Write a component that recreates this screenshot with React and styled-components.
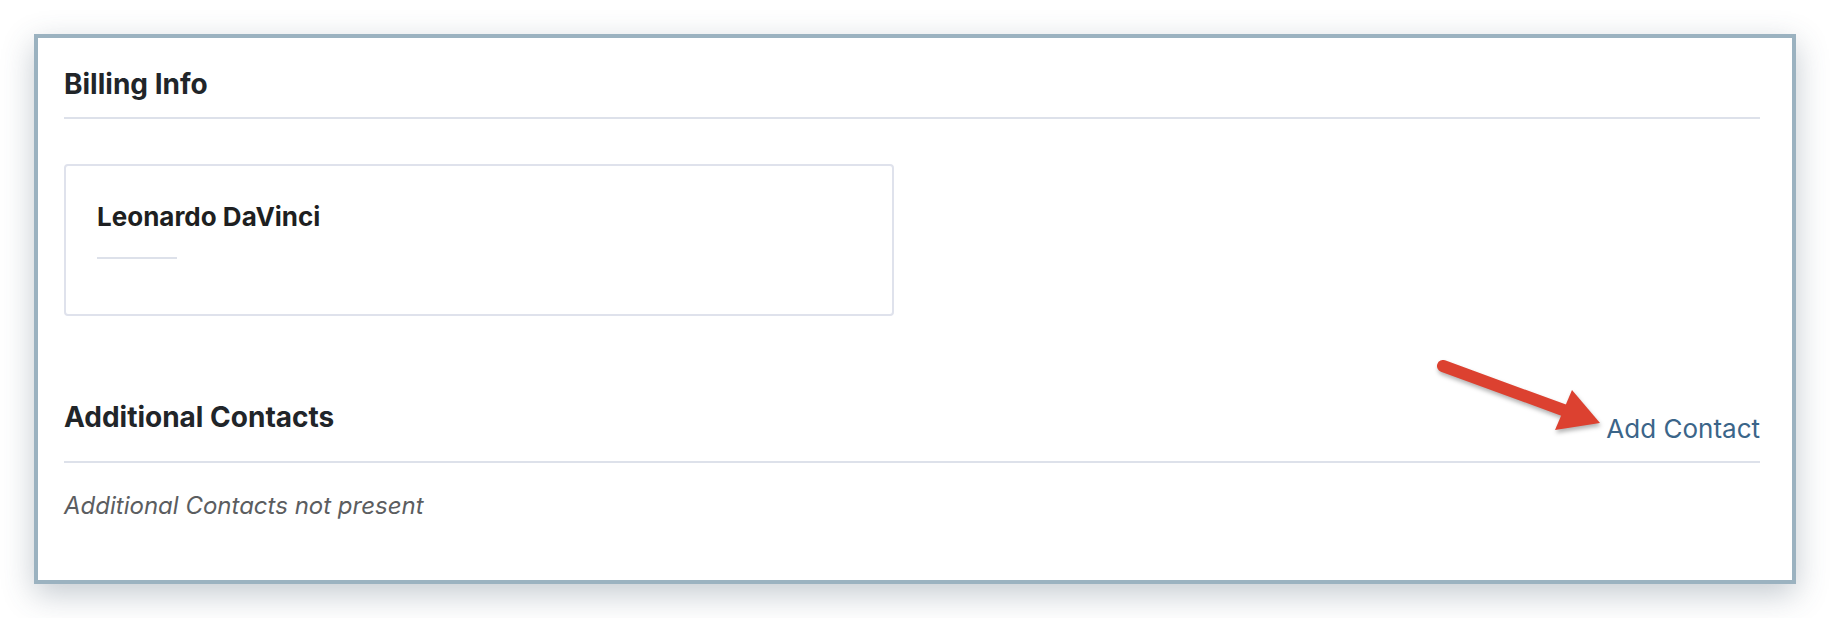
import React from 'react';
import styled, { createGlobalStyle } from 'styled-components';

const GlobalStyle = createGlobalStyle`
  html, body {
    margin: 0;
    padding: 0;
    background: #ffffff;
    font-family: Inter, "Noto Sans", "Liberation Sans", sans-serif;
  }
`;

const Page = styled.div`
  padding: 34px;
  width: 1762px;
`;

const Frame = styled.div`
  position: relative;
  border: 4px solid #9bb2c0;
  background: #fff;
  box-shadow: 0 10px 30px rgba(60, 80, 100, 0.3);
  padding: 30px 32px 59px 26px;
`;

const SectionHeader = styled.div`
  display: flex;
  justify-content: space-between;
  align-items: flex-end;
  padding-bottom: ${(p) => p.$pb || 17}px;
  border-bottom: 2px solid #dde1ea;
`;

const Title = styled.h2`
  margin: 0 0 ${(p) => p.$mb || 0}px 0;
  font-size: 28px;
  line-height: 32px;
  font-weight: 700;
  color: #212529;
`;

const ContactCard = styled.div`
  margin-top: 45px;
  width: 830px;
  box-sizing: border-box;
  border: 2px solid #dfe2ec;
  border-radius: 4px;
  padding: 35px 31px 55px 31px;
`;

const Name = styled.div`
  font-size: 26px;
  line-height: 32px;
  font-weight: 700;
  color: #1e1f21;
`;

const NameRule = styled.div`
  margin-top: 24px;
  width: 80px;
  height: 2px;
  background: #dde1ea;
`;

const Spacer = styled.div`
  height: 85px;
`;

const AddLink = styled.a`
  font-size: 26px;
  line-height: 32px;
  color: #3b6589;
  text-decoration: none;
  cursor: pointer;
`;

const EmptyNote = styled.p`
  margin: 28px 0 0 0;
  font-size: 24px;
  line-height: 30px;
  font-style: italic;
  color: #5b5d60;
`;

const Pointer = styled.svg`
  position: absolute;
  left: 1392px;
  top: 315px;
  overflow: visible;
  filter: drop-shadow(1px 3px 2px rgba(0, 0, 0, 0.3));
`;

const Arrow = () => (
  <Pointer width="180" height="85" viewBox="0 0 180 85">
    <line x1="13" y1="13" x2="136" y2="58" stroke="#dc4130" strokeWidth="12" strokeLinecap="round" />
    <polygon points="142,37 125,77 170,70" fill="#dc4130" />
  </Pointer>
);

export default function App() {
  return (
    <Page>
      <GlobalStyle />
      <Frame>
        <SectionHeader>
          <Title>Billing Info</Title>
        </SectionHeader>
        <ContactCard>
          <Name>Leonardo DaVinci</Name>
          <NameRule />
        </ContactCard>
        <Spacer />
        <SectionHeader $pb={16}>
          <Title $mb={12}>Additional Contacts</Title>
          <AddLink>Add Contact</AddLink>
        </SectionHeader>
        <EmptyNote>Additional Contacts not present</EmptyNote>
        <Arrow />
      </Frame>
    </Page>
  );
}
